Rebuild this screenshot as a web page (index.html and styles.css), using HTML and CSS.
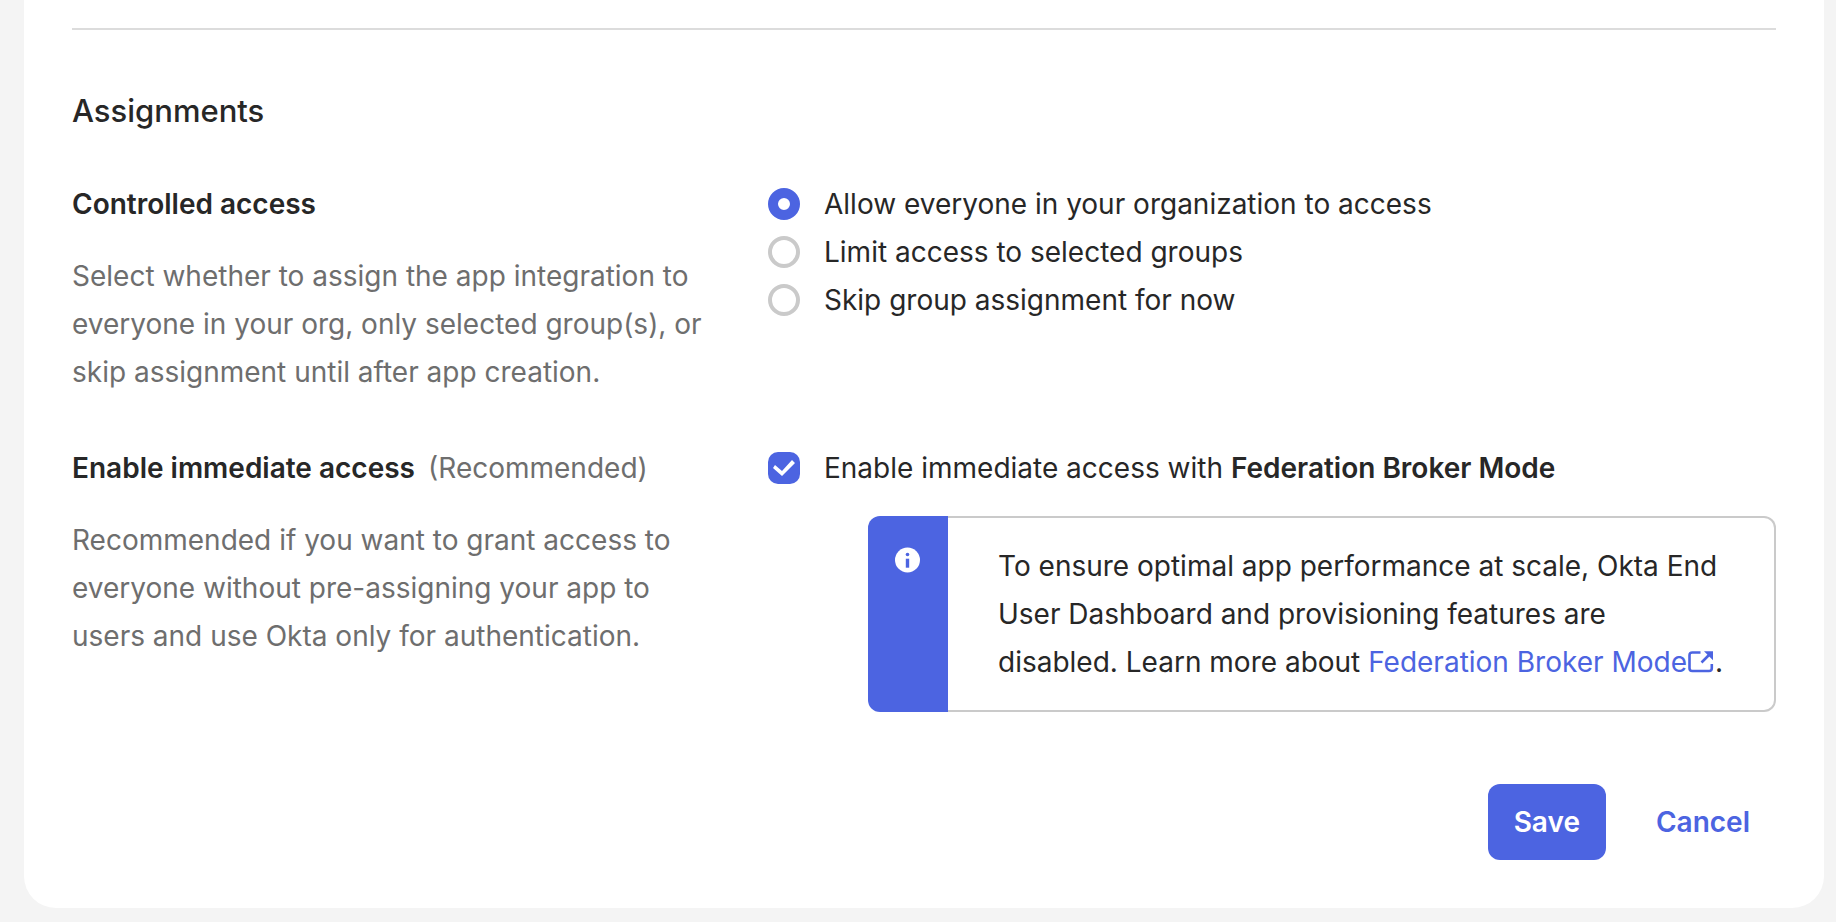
FILE: index.html
```html
<!DOCTYPE html>
<html lang="en">

<head>
    <meta charset="UTF-8">
    <meta name="viewport" content="width=device-width, initial-scale=1.0">
    <title>Create app integration</title>
    <link rel="stylesheet" href="styles.css">
</head>

<body>
    <form class="card">
        <h2>Assignments</h2>

        <!-- Controlled access -->
        <div class="row">
            <div class="info">
                <h3 id="controlledLabel">Controlled access</h3>
                <p>Select whether to assign the app integration to everyone in your org, only selected group(s), or skip assignment until after app creation.</p>
            </div>
            <div class="options" role="radiogroup" aria-labelledby="controlledLabel">
                <label class="option">
                    <input type="radio" name="access" value="everyone" checked>
                    <span>Allow everyone in your organization to access</span>
                </label>
                <label class="option">
                    <input type="radio" name="access" value="groups">
                    <span>Limit access to selected groups</span>
                </label>
                <label class="option">
                    <input type="radio" name="access" value="skip">
                    <span>Skip group assignment for now</span>
                </label>
            </div>
        </div>

        <!-- Immediate access -->
        <div class="row">
            <div class="info">
                <h3>Enable immediate access <span class="hint">(Recommended)</span></h3>
                <p>Recommended if you want to grant access to everyone without pre-assigning your app to users and use Okta only for authentication.</p>
            </div>
            <div class="options">
                <label class="option">
                    <input type="checkbox" name="immediate" checked>
                    <span>Enable immediate access with <b>Federation Broker Mode</b></span>
                </label>
                <div class="infobox">
                    <div class="infobox-icon">
                        <svg width="26" height="26" viewBox="0 0 26 26" aria-hidden="true">
                            <circle cx="12.5" cy="13" r="12.5" fill="#fff"/>
                            <circle cx="12.5" cy="7.5" r="1.8" fill="#4c64e1"/>
                            <path d="M10.8 11.700h3.400v9h-3.400z" fill="#4c64e1"/>
                        </svg>
                    </div>
                    <p>To ensure optimal app performance at scale, Okta End User Dashboard and provisioning features are disabled. Learn more about <a href="#">Federation Broker Mode<svg class="external" width="26" height="22" viewBox="0 0 26 22" aria-hidden="true"><path d="M12.500 1.500H4.300Q1.500 1.500 1.500 4.300V17.200Q1.500 20 4.300 20H21Q23.800 20 23.800 17.200V13M13.500 11.500L22 3" fill="none" stroke="currentColor" stroke-width="2.600"/><path d="M16 .2h9v9z" fill="currentColor"/></svg></a>.</p>
                </div>
            </div>
        </div>

        <div class="actions">
            <button type="submit" class="button primary">Save</button>
            <button type="button" class="button">Cancel</button>
        </div>
    </form>
</body>

</html>
```
FILE: styles.css
```css
* {
    box-sizing: border-box;
}

body {
    margin: 0;
    padding: 0 12px 14px 24px;
    background: #f4f4f4;
    color: #272727;
    font-family: Inter, sans-serif;
    font-size: 28px;
    line-height: 48px;
}

.card {
    padding: 28px 48px 48px;
    background: #fff;
    border-radius: 0 0 32px 32px;
}

h2 {
    margin: 0;
    padding: 60px 0 48px;
    border-top: 2px solid #dcdcdc;
    font-size: 31px;
    font-weight: 500;
    line-height: 42px;
}

h3 {
    margin: 0 0 24px;
    font-size: 28px;
    font-weight: 600;
}

p {
    margin: 0;
}

/* Setting rows */
.row {
    display: grid;
    grid-template-columns: 640px 1fr;
    column-gap: 56px;
    margin-bottom: 48px;
}

.info p,
.hint {
    color: #6e6e6e;
}

.hint {
    margin-left: 6px;
    font-weight: 400;
}

.option {
    display: flex;
    align-items: center;
    gap: 24px;
}

/* Radios and checkboxes */
input {
    appearance: none;
    flex: none;
    width: 32px;
    height: 32px;
    margin: 0;
    border: 4px solid #cacaca;
    background: #fff;
}

input[type="radio"] {
    border-radius: 50%;
}

input[type="radio"]:checked {
    border: 10px solid #4c64e1;
}

input[type="checkbox"] {
    border-radius: 10px;
}

input[type="checkbox"]:checked {
    border: 0;
    background: #4c64e1;
}

input[type="checkbox"]:checked::before {
    content: "";
    display: block;
    height: 32px;
    background: #fff;
    clip-path: polygon(5px 16px, 14px 24px, 27px 11px, 24px 8px, 14px 19px, 7px 13px);
}

b {
    font-weight: 600;
}

/* Info box */
.infobox {
    display: flex;
    margin: 24px 0 0 100px;
}

.infobox-icon {
    flex: none;
    width: 80px;
    padding-top: 31px;
    border-radius: 12px 0 0 12px;
    background: #4c64e1;
}

.infobox-icon svg {
    display: block;
    margin: 0 auto;
}

.infobox p {
    flex: 1;
    padding: 24px 48px 24px 50px;
    border: 2px solid #cacaca;
    border-left: 0;
    border-radius: 0 12px 12px 0;
}

a {
    color: #4c64e1;
    text-decoration: none;
}

.external {
    margin: 0 1px;
    vertical-align: -1px;
}

/* Buttons */
.actions {
    display: flex;
    justify-content: flex-end;
    margin-top: 72px;
}

.button {
    height: 76px;
    padding: 0 26px;
    border: 0;
    border-radius: 12px;
    background: none;
    color: #4c64e1;
    font: 600 28px Inter, sans-serif;
}

.primary {
    margin-right: 24px;
    background: #4c64e1;
    color: #fff;
}
```
